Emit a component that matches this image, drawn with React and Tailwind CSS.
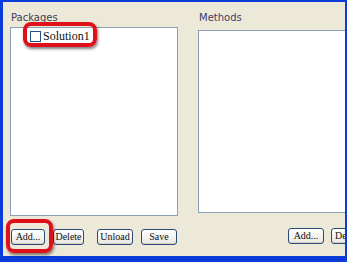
import React from "react";

const XpButton = ({ children, className = "" }) => (
  <button
    className={`flex h-[16px] shrink-0 items-center justify-center overflow-hidden whitespace-nowrap rounded-[3px] border border-[#2a4a78] bg-gradient-to-b from-white to-[#e9e7df] p-0 text-[10px] leading-none text-[#111] shadow-[inset_0_-1px_0_#d6d0c0] ${className}`}
    style={{ fontFamily: '"Liberation Serif", serif' }}
  >
    {children}
  </button>
);

const Highlight = ({ className }) => (
  <div
    className={`pointer-events-none absolute rounded-[8px] border-[4px] border-[#e0101b] shadow-[1px_2px_3px_rgba(0,0,0,0.5)] ${className}`}
  />
);

export default function App() {
  return (
    <div className="relative h-[262px] w-[347px] overflow-hidden bg-[#0b3bd8] pb-[6px] pl-[3px] pr-[2px] pt-[2px]">
      <div
        className="flex h-full overflow-hidden bg-[#ece9d8]"
        style={{ fontFamily: '"DejaVu Sans", "Liberation Sans", sans-serif' }}
      >
        {/* packages column */}
        <div className="flex w-[175px] shrink-0 flex-col pl-[7px]">
          <div className="mt-[8px] h-[15px] pl-[1px] text-[10px] leading-[15px] text-[#3d3d55]">
            Packages
          </div>
          <div className="mt-[2px] h-[189px] w-[168px] border border-[#8a9eb8] bg-white pl-[19px] pt-[2px]">
            <div className="flex items-center gap-[2px]">
              <span className="block h-[11px] w-[11px] border border-[#1c5180] bg-white" />
              <span
                className="text-[12px] leading-[13px] text-[#111]"
                style={{ fontFamily: '"Liberation Serif", serif' }}
              >
                Solution1
              </span>
            </div>
          </div>
          <div className="mt-[13px] flex items-start">
            <XpButton className="ml-[1px] w-[34px]">Add...</XpButton>
            <XpButton className="ml-[8px] w-[31px]">Delete</XpButton>
            <XpButton className="ml-[13px] w-[36px]">Unload</XpButton>
            <XpButton className="ml-[8px] w-[36px]">Save</XpButton>
          </div>
        </div>

        {/* methods column */}
        <div className="flex min-w-0 flex-1 flex-col pl-[20px]">
          <div className="mt-[8px] h-[15px] pl-[1px] text-[10px] leading-[15px] text-[#3d3d6a]">
            Methods
          </div>
          <div className="mt-[5px] h-[183px] w-[160px] shrink-0 border border-[#8a9eb8] bg-white" />
          <div className="mt-[15px] flex items-start">
            <XpButton className="ml-[90px] w-[36px]">Add...</XpButton>
            <XpButton className="ml-[7px] w-[31px] justify-start pl-[3px]">Delete</XpButton>
          </div>
        </div>
      </div>
      <Highlight className="left-[23px] top-[22px] h-[25px] w-[74px]" />
      <Highlight className="left-[6px] top-[219px] h-[34px] w-[47px]" />
    </div>
  );
}
